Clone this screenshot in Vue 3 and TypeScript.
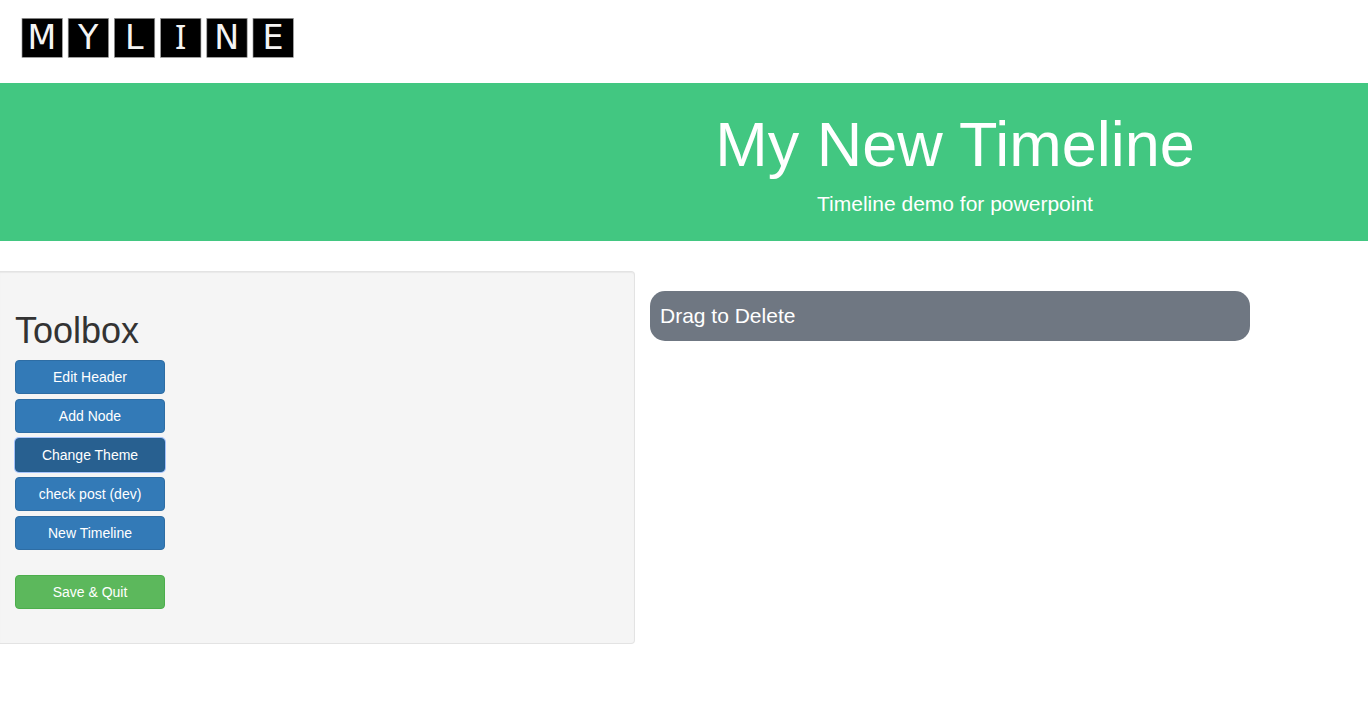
<script setup lang="ts">
import { ref } from 'vue'

const logo = ['M', 'Y', 'L', 'I', 'N', 'E']
const tools = ['Edit Header', 'Add Node', 'Change Theme', 'check post (dev)', 'New Timeline']
const active = ref('Change Theme')
</script>

<template>
  <div class="page">
    <header class="navbar">
      <a class="brand" href="#" aria-label="Myline">
        <svg class="logo" viewBox="0 0 822 120" aria-hidden="true">
          <g v-for="(letter, i) in logo" :key="letter" :transform="`translate(${i * 138.6 + 3} 1)`">
            <rect class="tile" width="121" height="117" />
            <text class="letter" :class="{ slab: letter === 'I' }" x="60" y="93">{{ letter }}</text>
          </g>
        </svg>
      </a>
    </header>

    <section class="banner">
      <div class="heading">
        <h1>My New Timeline</h1>
        <p>Timeline demo for powerpoint</p>
      </div>
    </section>

    <main class="workspace">
      <aside class="toolbox">
        <h2>Toolbox</h2>
        <div class="tools">
          <button
            v-for="tool in tools"
            :key="tool"
            type="button"
            class="btn"
            :class="{ active: tool === active }"
            @click="active = tool"
          >{{ tool }}</button>
        </div>
        <button type="button" class="btn save">Save &amp; Quit</button>
      </aside>
      <section class="timeline">
        <div class="trash">Drag to Delete</div>
      </section>
    </main>
  </div>
</template>

<style>
body {
  margin: 0;
  background: #fff;
}
</style>

<style scoped>
.page {
  font-family: "Liberation Sans", Arial, sans-serif;
  font-size: 14px;
  line-height: 20px;
  color: #333;
}
.page * {
  box-sizing: border-box;
}
.navbar {
  height: 83px;
  padding: 18px 21px;
}
.brand {
  display: inline-block;
}
.logo {
  display: block;
  width: 274px;
  height: 40px;
  overflow: visible;
}
.tile {
  fill: #000;
  stroke: #999;
  stroke-width: 2px;
}
.letter {
  fill: #f4f4f4;
  font-family: "DejaVu Sans", Verdana, sans-serif;
  font-size: 100px;
  text-anchor: middle;
}
.letter.slab {
  font-family: "Noto Sans", sans-serif;
}
.banner,
.workspace {
  display: grid;
  grid-template-columns: 635fr 733fr;
}
.banner {
  padding: 27px 0 22px;
  background: #42c781;
  color: #fff;
}
.heading {
  grid-column: 2;
  max-width: 640px;
  text-align: center;
}
h1 {
  margin: 0 0 10px;
  font-size: 63px;
  font-weight: 400;
  line-height: 69px;
}
p {
  margin: 0;
  font-size: 21px;
  line-height: 30px;
}
.workspace {
  margin-top: 30px;
  align-items: start;
}
.toolbox {
  display: flex;
  flex-direction: column;
  align-items: flex-start;
  padding: 38px 15px 34px;
  border: 1px solid #e3e3e3;
  border-left: 0;
  border-radius: 0 4px 4px 0;
  background: #f5f5f5;
  box-shadow: inset 0 1px 1px rgba(0, 0, 0, 0.05);
}
h2 {
  margin: 0 0 8px;
  font-size: 36px;
  font-weight: 400;
  line-height: 42px;
}
.tools {
  display: flex;
  flex-direction: column;
  gap: 5px;
  margin-bottom: 25px;
}
.btn {
  width: 150px;
  padding: 6px 12px;
  border: 1px solid #2e6da4;
  border-radius: 4px;
  background: #337ab7;
  color: #fff;
  font-family: inherit;
  font-size: 14px;
  line-height: 20px;
  text-align: center;
  cursor: pointer;
}
.btn.active {
  border-color: #265c8b;
  background: #286090;
  box-shadow: 0 0 0 1px #a3c2fb;
}
.btn.save {
  border-color: #4cae4c;
  background: #5cb85c;
}
.timeline {
  padding: 20px 15px;
}
.trash {
  max-width: 600px;
  padding: 10px;
  border-radius: 15px;
  background: #6f7782;
  color: #fff;
  font-size: 21px;
  line-height: 30px;
}
</style>
